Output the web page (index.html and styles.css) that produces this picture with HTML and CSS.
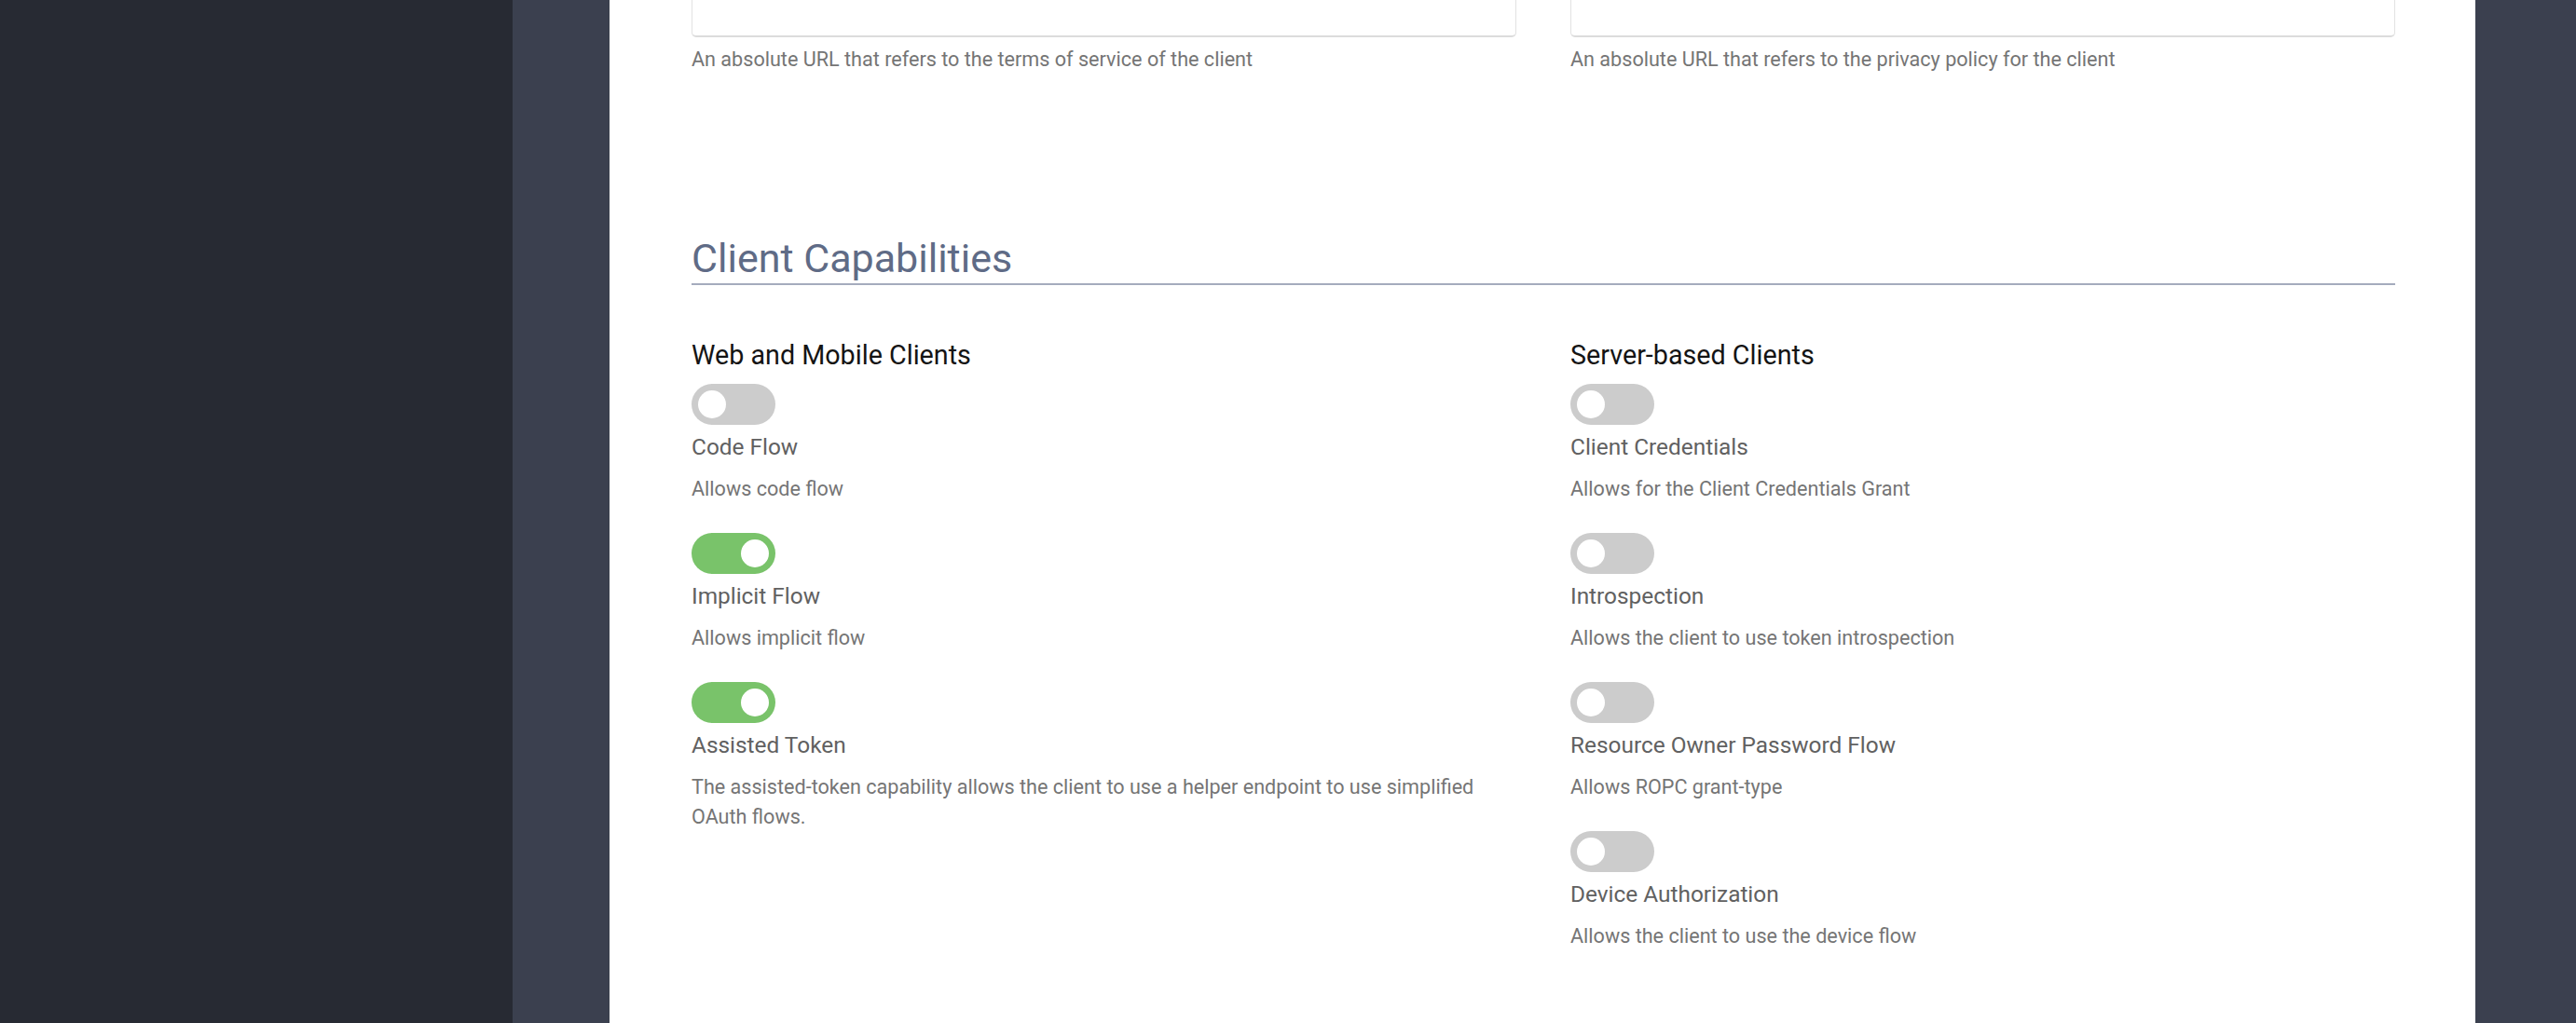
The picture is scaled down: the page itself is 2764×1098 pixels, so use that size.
FILE: index.html
```html
<!DOCTYPE html>
<html lang="en">
<head>
<meta charset="utf-8">
<title>Client Capabilities</title>
<link rel="stylesheet" href="styles.css">
</head>
<body>
<div class="app">
  <aside class="sidebar"></aside>
  <div class="stage">
    <main class="panel">
      <div class="content">
        <div class="grid fields">
          <div class="field">
            <div class="input"></div>
            <p class="help">An absolute URL that refers to the terms of service of the client</p>
          </div>
          <div class="field">
            <div class="input"></div>
            <p class="help">An absolute URL that refers to the privacy policy for the client</p>
          </div>
        </div>

        <h2 class="section-title">Client Capabilities</h2>

        <div class="grid caps">
          <div class="col">
            <h3 class="group-title">Web and Mobile Clients</h3>
            <div class="cap">
              <span class="toggle"><span class="knob"></span></span>
              <div class="cap-label">Code Flow</div>
              <p class="cap-desc">Allows code flow</p>
            </div>
            <div class="cap">
              <span class="toggle on"><span class="knob"></span></span>
              <div class="cap-label">Implicit Flow</div>
              <p class="cap-desc">Allows implicit flow</p>
            </div>
            <div class="cap">
              <span class="toggle on"><span class="knob"></span></span>
              <div class="cap-label">Assisted Token</div>
              <p class="cap-desc">The assisted-token capability allows the client to use a helper endpoint to use simplified OAuth flows.</p>
            </div>
          </div>
          <div class="col">
            <h3 class="group-title">Server-based Clients</h3>
            <div class="cap">
              <span class="toggle"><span class="knob"></span></span>
              <div class="cap-label">Client Credentials</div>
              <p class="cap-desc">Allows for the Client Credentials Grant</p>
            </div>
            <div class="cap">
              <span class="toggle"><span class="knob"></span></span>
              <div class="cap-label">Introspection</div>
              <p class="cap-desc">Allows the client to use token introspection</p>
            </div>
            <div class="cap">
              <span class="toggle"><span class="knob"></span></span>
              <div class="cap-label">Resource Owner Password Flow</div>
              <p class="cap-desc">Allows ROPC grant-type</p>
            </div>
            <div class="cap">
              <span class="toggle"><span class="knob"></span></span>
              <div class="cap-label">Device Authorization</div>
              <p class="cap-desc">Allows the client to use the device flow</p>
            </div>
          </div>
        </div>
      </div>
    </main>
  </div>
</div>
</body>
</html>
```

FILE: styles.css
```css
html, body {
  margin: 0;
  padding: 0;
  height: 100%;
  overflow: hidden;
}

body {
  font-family: Roboto, "Liberation Sans", Arial, sans-serif;
  background: #3b404f;
}

.app {
  display: flex;
  height: 1098px;
}

.sidebar {
  width: 550px;
  flex: 0 0 550px;
  background: #272a33;
}

.stage {
  flex: 1;
  background: #3b404f;
  padding: 0 108px 0 104px;
  display: flex;
}

.panel {
  flex: 1;
  background: #ffffff;
  padding: 0 86px 0 88px;
  overflow: hidden;
}

.content {
  margin-top: -31px;
}

.grid {
  display: grid;
  grid-template-columns: 1fr 1fr;
  column-gap: 58px;
}

.input {
  height: 68px;
  border: 1px solid #e2e2e2;
  border-bottom: 2px solid #dcdcdc;
  border-radius: 5px;
  background: #fff;
}

.help {
  margin: 8px 0 0;
  font-size: 21.6px;
  line-height: 32px;
  color: #757575;
}

.section-title {
  margin: 172px 0 0;
  padding-bottom: 2px;
  font-size: 43px;
  line-height: 50px;
  font-weight: 400;
  color: #5f6b86;
  border-bottom: 2px solid #a5abbd;
}

.caps {
  margin-top: 57px;
}

.group-title {
  margin: 0 0 13px;
  font-size: 28.7px;
  line-height: 36px;
  font-weight: 400;
  color: #141414;
}

.cap {
  margin-bottom: 31px;
}

.toggle {
  display: block;
  position: relative;
  width: 90px;
  height: 44px;
  border-radius: 22px;
  background: #cccccc;
}

.toggle .knob {
  position: absolute;
  top: 7px;
  left: 7px;
  width: 30px;
  height: 30px;
  border-radius: 50%;
  background: #ffffff;
}

.toggle.on {
  background: #79c36a;
}

.toggle.on .knob {
  left: auto;
  right: 7px;
}

.cap-label {
  margin-top: 8px;
  font-size: 24.4px;
  line-height: 32px;
  color: #616161;
}

.cap-desc {
  margin: 13px 0 0;
  font-size: 21.6px;
  line-height: 32px;
  color: #757575;
}
```
